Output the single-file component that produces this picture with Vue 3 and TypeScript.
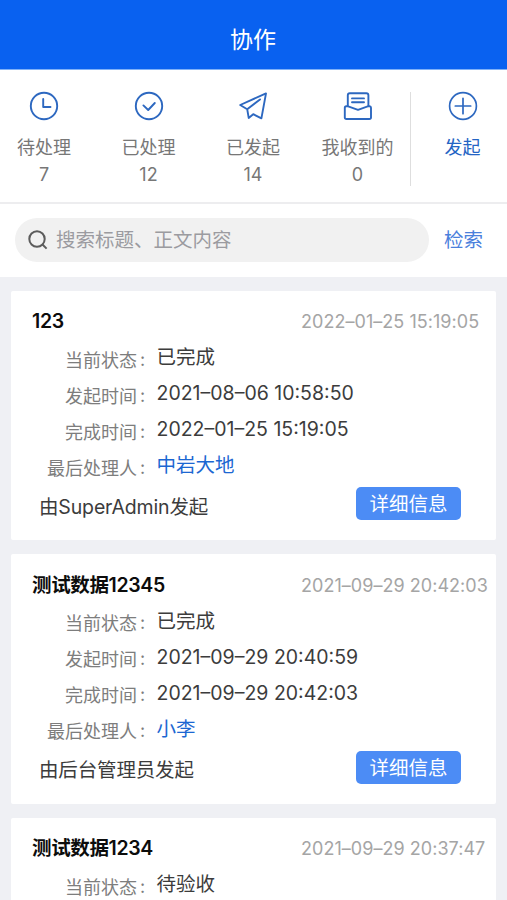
<script setup lang="ts">
interface Tab {
  icon: 'clock' | 'check' | 'plane' | 'inbox'
  label: string
  count: number
}

interface Field {
  label: string
  value: string
  link?: boolean
}

interface Item {
  title: string
  date: string
  fields: Field[]
  from: string
}

const tabs: Tab[] = [
  { icon: 'clock', label: '待处理', count: 7 },
  { icon: 'check', label: '已处理', count: 12 },
  { icon: 'plane', label: '已发起', count: 14 },
  { icon: 'inbox', label: '我收到的', count: 0 },
]

const items: Item[] = [
  {
    title: '123',
    date: '2022–01–25 15:19:05',
    fields: [
      { label: '当前状态', value: '已完成' },
      { label: '发起时间', value: '2021–08–06 10:58:50' },
      { label: '完成时间', value: '2022–01–25 15:19:05' },
      { label: '最后处理人', value: '中岩大地', link: true },
    ],
    from: '由SuperAdmin发起',
  },
  {
    title: '测试数据12345',
    date: '2021–09–29 20:42:03',
    fields: [
      { label: '当前状态', value: '已完成' },
      { label: '发起时间', value: '2021–09–29 20:40:59' },
      { label: '完成时间', value: '2021–09–29 20:42:03' },
      { label: '最后处理人', value: '小李', link: true },
    ],
    from: '由后台管理员发起',
  },
  {
    title: '测试数据1234',
    date: '2021–09–29 20:37:47',
    fields: [{ label: '当前状态', value: '待验收' }],
    from: '',
  },
]
</script>

<template>
  <div class="page">
    <header class="header">协作</header>

    <nav class="tabs">
      <div class="tab-list">
        <div v-for="tab in tabs" :key="tab.label" class="tab">
          <svg class="icon" viewBox="0 0 30 30">
            <template v-if="tab.icon === 'clock'">
              <circle cx="15" cy="15" r="13.2" />
              <path d="M14.2 8V16H21.5" />
            </template>
            <template v-else-if="tab.icon === 'check'">
              <circle cx="15" cy="15" r="13.2" />
              <path d="M9.4 14.4L14.2 19L20.8 12" />
            </template>
            <template v-else-if="tab.icon === 'plane'">
              <path d="M9.2 18.2L2.2 14L28 2.4L23.4 27.4L15.2 23.2L10.7 26.9L9.2 18.2L22 8.4" />
            </template>
            <template v-else>
              <path d="M4.8 15V4.3Q4.8 2.3 6.8 2.3H23.4Q25.4 2.3 25.4 4.3V15" />
              <path d="M9 7.4H21M9 11.2H21" />
              <path d="M4.5 15.2H3.2Q1.8 15.2 1.8 16.8V26.5Q1.8 28 3.5 28H26.3Q28 28 28 26.5V16.8Q28 15.2 26.6 15.2H25.4L15 18.8L4.5 15.2" />
            </template>
          </svg>
          <span class="tab-label">{{ tab.label }}</span>
          <span class="tab-count">{{ tab.count }}</span>
        </div>
      </div>
      <div class="divider"></div>
      <div class="tab create">
        <svg class="icon" viewBox="0 0 30 30">
          <circle cx="15" cy="15" r="13.4" />
          <path d="M15 7.3V22.7M7.3 15H22.7" />
        </svg>
        <span class="tab-label">发起</span>
      </div>
    </nav>

    <div class="search">
      <div class="search-box">
        <svg class="search-icon" viewBox="0 0 20 20">
          <circle cx="9" cy="9" r="7.7" />
          <path d="M14.5 14.5L18.6 18.6" />
        </svg>
        <span class="placeholder">搜索标题、正文内容</span>
      </div>
      <span class="search-action">检索</span>
    </div>

    <main class="list">
      <article v-for="item in items" :key="item.title" class="card">
        <div class="card-head">
          <h2 class="title">{{ item.title }}</h2>
          <time class="date">{{ item.date }}</time>
        </div>
        <div v-for="field in item.fields" :key="field.label" class="row">
          <span class="label">{{ field.label }}<i class="colon">:</i></span>
          <span class="value" :class="{ link: field.link }">{{ field.value }}</span>
        </div>
        <div v-if="item.from" class="card-foot">
          <span class="from">{{ item.from }}</span>
          <button class="detail" type="button">详细信息</button>
        </div>
      </article>
    </main>
  </div>
</template>

<style>
body {
  overflow: hidden;
}
</style>

<style scoped>
.page {
  height: 900px;
  overflow: hidden;
  display: flex;
  flex-direction: column;
  background: #eff0f4;
  font-family: Inter, 'Noto Sans CJK SC', sans-serif;
  color: #3c3c3c;
}

.page * {
  box-sizing: border-box;
  flex-shrink: 0;
  white-space: nowrap;
}

.header {
  height: 70px;
  padding: 10px 1px 0 0;
  line-height: 60px;
  text-align: center;
  font-size: 23px;
  color: #fff;
  background: #0961f0;
  border-bottom: 1px solid #7fb1f8;
}

.tabs {
  height: 134px;
  display: flex;
  background: #fff;
  border-bottom: 2px solid #ededef;
}

.tab-list {
  display: flex;
  gap: 16.5px;
}

.tab {
  width: 88px;
  padding-top: 21px;
  display: flex;
  flex-direction: column;
  align-items: center;
  font-size: 18px;
  color: #777;
}

.icon {
  width: 30px;
  height: 30px;
  fill: none;
  stroke: #2d68c0;
  stroke-width: 1.9;
  stroke-linejoin: round;
  stroke-linecap: round;
}

.tab-label {
  margin-top: 14px;
  line-height: 26px;
}

.tab-count {
  line-height: 27px;
}

.divider {
  width: 1px;
  height: 94px;
  margin: 22px 9px 0 8px;
  background: #dedede;
}

.create {
  margin-left: -1px;
  color: #2464c4;
}

.create .icon {
  stroke-width: 1.7;
}

.search {
  height: 73px;
  padding: 0 24px 1px 15px;
  display: flex;
  align-items: center;
  justify-content: space-between;
  background: #fff;
}

.search-box {
  width: 414px;
  height: 44px;
  padding-left: 13px;
  display: flex;
  align-items: center;
  gap: 8px;
  border-radius: 22px;
  color: #9b9ba0;
  background: #f1f1f1;
}

.search-icon {
  width: 20px;
  height: 20px;
  fill: none;
  stroke: #5c5c5c;
  stroke-width: 2;
}

.placeholder,
.search-action {
  font-size: 19.5px;
  line-height: 44px;
}

.search-action {
  color: #4a80dc;
}

.list {
  padding: 13.5px 11px 0;
  display: flex;
  flex-direction: column;
  gap: 14px;
}

.card {
  height: 249.5px;
  padding-top: 13.5px;
  border-radius: 2px;
  background: #fff;
}

.card-head {
  height: 35px;
  padding-left: 21px;
  display: flex;
  align-items: center;
  line-height: 35px;
}

.title {
  width: 269px;
  margin: 0;
  font-size: 19.5px;
  font-weight: 600;
  letter-spacing: -0.35px;
  color: #0c0c0c;
}

.date {
  font-size: 18px;
  letter-spacing: 0.04px;
  color: #a5a5a5;
}

.row {
  height: 36px;
  display: flex;
  align-items: center;
  line-height: 36px;
}

.label {
  width: 136px;
  padding-top: 7px;
  display: flex;
  justify-content: flex-end;
  font-size: 18px;
  color: #7d7d7d;
}

.colon {
  width: 10px;
  padding-left: 3px;
  line-height: 33px;
  font-style: normal;
}

.value {
  padding-left: 9.5px;
  font-size: 19.5px;
}

.link {
  color: #1c67d2;
}

.card-foot {
  height: 41px;
  padding: 0 35px 0 28px;
  display: flex;
  align-items: center;
  justify-content: space-between;
}

.from {
  padding-top: 6px;
  font-size: 19.5px;
  line-height: 36px;
  letter-spacing: -0.15px;
}

.detail {
  width: 105px;
  height: 33px;
  padding: 0;
  border: 0;
  border-radius: 5px;
  font: inherit;
  font-size: 19.5px;
  line-height: 34px;
  color: #fff;
  background: #4c8cf5;
}
</style>
